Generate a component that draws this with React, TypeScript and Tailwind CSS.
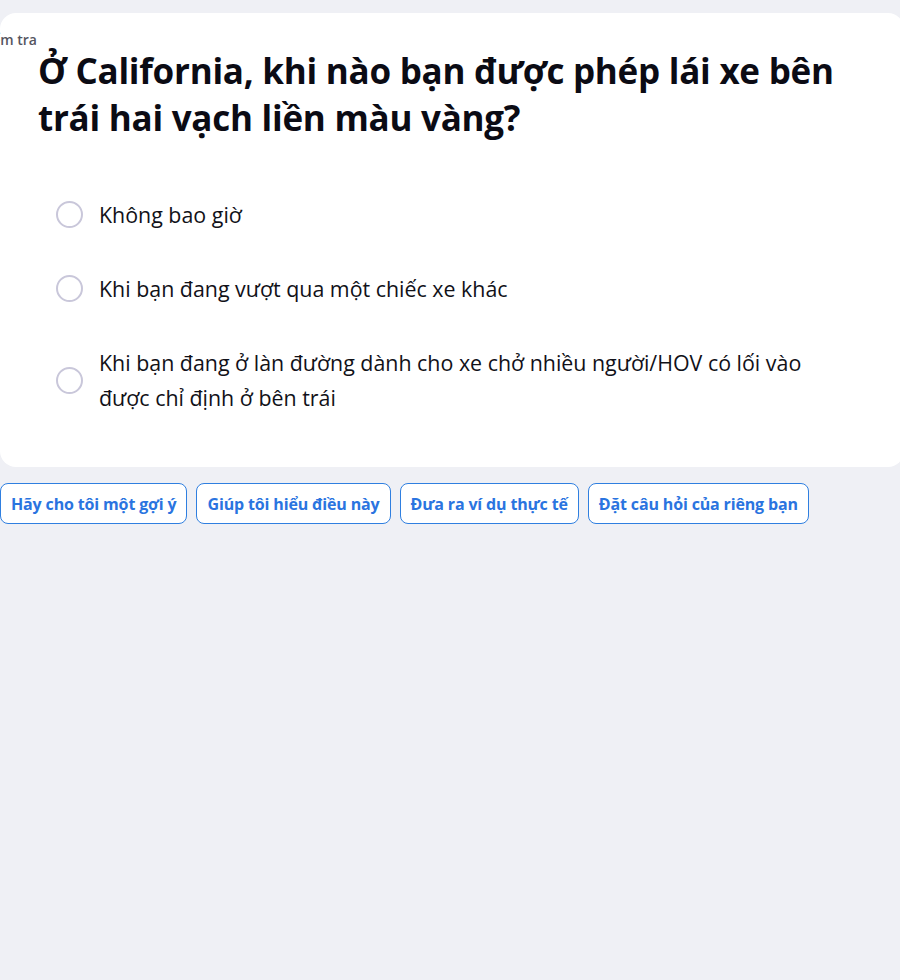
import React from "react";

const options = [
  "Không bao giờ",
  "Khi bạn đang vượt qua một chiếc xe khác",
  "Khi bạn đang ở làn đường dành cho xe chở nhiều người/HOV có lối vào được chỉ định ở bên trái",
];

const chips = [
  "Hãy cho tôi một gợi ý",
  "Giúp tôi hiểu điều này",
  "Đưa ra ví dụ thực tế",
  "Đặt câu hỏi của riêng bạn",
];

export default function App() {
  return (
    <div
      className="w-[900px] h-[980px] overflow-hidden bg-[#eff0f5] pt-[13px]"
      style={{ fontFamily: "'Open Sans', 'Noto Sans', sans-serif" }}
    >
      <div className="w-[904px] bg-white rounded-[16px] pt-[18px] pb-[52px]">
        <div className="w-[37px] flex justify-end">
          <span className="whitespace-nowrap text-[14px] font-semibold text-[#55555f] leading-[18px]">
            Kiểm tra
          </span>
        </div>
        <h1 className="pl-[38px] pr-[40px] text-[35px] font-bold leading-[47px] text-[#0b0b14] -mt-[2px] tracking-[-0.25px]">
          Ở California, khi nào bạn được phép lái xe bên trái hai vạch liền màu vàng?
        </h1>
        <div className="mt-[56px] pl-[56px] pr-[60px] flex flex-col gap-[39px]">
          {options.map((o) => (
            <div key={o} className="flex items-center gap-[16px]">
              <div className="w-[27px] h-[27px] shrink-0 rounded-full border-2 border-[#c9c7da]" />
              <span className="text-[21.4px] leading-[35px] text-[#111118]">{o}</span>
            </div>
          ))}
        </div>
      </div>
      <div className="mt-[16px] flex gap-[9px]">
        {chips.map((c) => (
          <button
            key={c}
            className="h-[41px] px-[10px] rounded-[8px] border border-[#2f7fe0] bg-white text-[16px] font-bold text-[#2a74e0] whitespace-nowrap tracking-[-0.15px]"
          >
            {c}
          </button>
        ))}
      </div>
    </div>
  );
}
